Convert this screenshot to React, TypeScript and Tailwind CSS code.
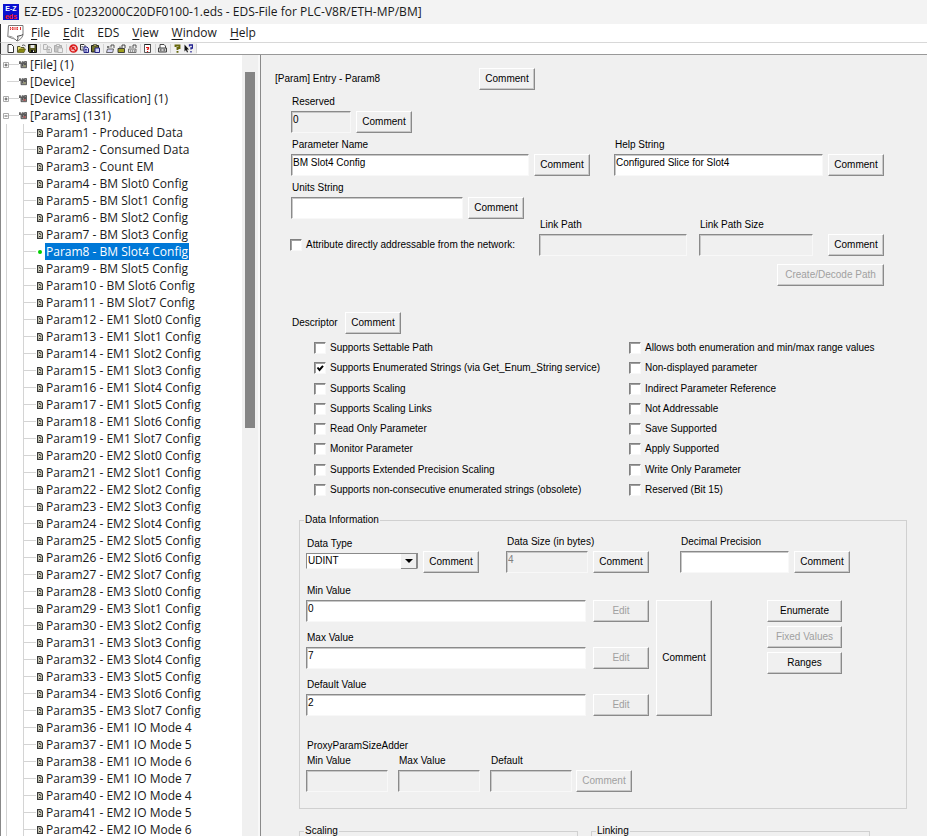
import { useState } from 'react'
import type { ReactNode } from 'react'
import clsx from 'clsx'

const menus = ['File', 'Edit', 'EDS', 'View', 'Window', 'Help']

const range = (count: number, from = 0) => Array.from({ length: count }, (_, i) => i + from)

const params = [
  'Produced Data',
  'Consumed Data',
  'Count EM',
  ...range(8).map((n) => `BM Slot${n} Config`),
  ...['EM1', 'EM2', 'EM3'].flatMap((em) => range(8).map((n) => `${em} Slot${n} Config`)),
  ...range(4, 4).map((n) => `EM1 IO Mode ${n}`),
  ...range(3, 4).map((n) => `EM2 IO Mode ${n}`),
]

const descriptorLeft = [
  'Supports Settable Path',
  'Supports Enumerated Strings (via Get_Enum_String service)',
  'Supports Scaling',
  'Supports Scaling Links',
  'Read Only Parameter',
  'Monitor Parameter',
  'Supports Extended Precision Scaling',
  'Supports non-consecutive enumerated strings (obsolete)',
]

const descriptorRight = [
  'Allows both enumeration and min/max range values',
  'Non-displayed parameter',
  'Indirect Parameter Reference',
  'Not Addressable',
  'Save Supported',
  'Apply Supported',
  'Write Only Parameter',
  'Reserved (Bit 15)',
]

/* ---------- icons ---------- */

function AppLogo() {
  return (
    <svg width="16" height="16" viewBox="0 0 16 16" className="font-['Liberation_Sans',sans-serif] font-bold">
      <rect width="16" height="16" fill="#0a10d0" />
      <text x="8" y="6.500" fontSize="7" textAnchor="middle" fill="#fff">
        E-Z
      </text>
      <text x="8" y="14.500" fontSize="7" textAnchor="middle" fill="#ff1818">
        eds
      </text>
    </svg>
  )
}

function DocumentLogo() {
  return (
    <svg width="17" height="17" viewBox="0 0 17 17">
      <path d="M1.500.5h14.500v9.500c-1 3-3 5-6 6-1-1.500-3-2.500-4.500-2.500L.8 11.500z" fill="#fff" stroke="#777" />
      <path d="M16 9.500c-2 1.200-4 1.500-5.500 1.500.8 1.500.5 3.500-.8 5" fill="#f4f4f4" stroke="#444" />
      <path d="M.5 11.500c2-.8 5 .2 7 2.200" fill="none" stroke="#999" />
      <path d="M3.500 2v3M5.500 2v3M7 2v3M9 2v3M10.500 2v3M13.500 2v3" stroke="#e03030" strokeWidth="1" />
      <path d="M3 3.500h8" stroke="#f0a0a0" strokeWidth=".8" />
    </svg>
  )
}

function SectionIcon({ red }: { red?: boolean }) {
  return (
    <svg width="8" height="8" viewBox="0 0 8 8" className="shrink-0">
      <path d="M0 .8h1.800v1.700H0zM3 2.200V.8h1.500v1.400M5.500 2.200V.5h2v6.200H2V2.500h5" fill="#8a8a8a" stroke="#4a4a4a" strokeWidth=".8" />
      <path d="M3 4h1M5.500 3.500h1" stroke="#222" />
      <path d="M4.500 5h2" stroke={red ? '#d02020' : '#b0b060'} />
    </svg>
  )
}

function ParamIcon() {
  return (
    <svg width="6" height="8" viewBox="0 0 6 8" className="shrink-0">
      <path d="M.6.6h3.200l1.600 1.600v5.200H.6z" fill="#e4e4d0" stroke="#3a3a3a" strokeWidth="1.200" />
      <path d="M2 2.600h1.200v1.200h1M2 5.500h1.800" fill="none" stroke="#333" strokeWidth="1" />
    </svg>
  )
}

const toolIcons: Record<string, ReactNode> = {
  New: <path d="M2 .5h3.500L7.500 2.500v6H2z" fill="#fff" stroke="#333" />,
  Open: (
    <>
      <path d="M.5 8V2.500h2.500l1 1h3V5" fill="#e8e070" stroke="#555530" />
      <path d="M.5 8.500L2.500 5h6L7 8.500z" fill="#8a8a10" stroke="#444410" strokeWidth=".6" />
      <path d="M5 1.500Q7 0 8.500 2" fill="none" stroke="#333" strokeWidth=".8" />
    </>
  ),
  Save: (
    <>
      <path d="M.5.500h8v8H1.500l-1-1z" fill="#55551a" stroke="#111" />
      <path d="M2.500 1h4v3h-4z" fill="#e8e8e8" />
      <path d="M3 6h3.500v2.500H3z" fill="#111" />
      <path d="M5.500 6.500v1.500" stroke="#fff" />
    </>
  ),
  Copy: (
    <path d="M.5.5h3l1 1v4h-4zM4 3h3l1.500 1.500v4H4zM5 5.500h2M5 7h2" fill="#ececec" stroke="#b4b4b4" />
  ),
  Paste: (
    <>
      <path d="M.5 1.500h7v6.500h-7z" fill="#c4c4c4" stroke="#aaa" />
      <path d="M2.500.5h3v2h-3zM4 4h4.500v4.500H4z" fill="#eee" stroke="#aaa" strokeWidth=".8" />
    </>
  ),
  Delete: (
    <>
      <circle cx="4.500" cy="4.500" r="3.600" fill="#f8c8c8" stroke="#d81818" strokeWidth="1.500" />
      <path d="M2 2l5 5M2.500 5.500l3-2.500" stroke="#d81818" strokeWidth="1.300" />
    </>
  ),
  'Copy Section': (
    <>
      <path d="M.5.500h3.500l1 1v4.500H.5z" fill="#fff" stroke="#333" />
      <path d="M1.500 2.500h2M1.500 4h2" stroke="#333" strokeWidth=".7" />
      <path d="M4 3h3l1.500 1.500v4H4z" fill="#c8c8f4" stroke="#202080" />
      <path d="M5 5.500h2M5 7h2" stroke="#202080" strokeWidth=".8" />
    </>
  ),
  'Paste Section': (
    <>
      <path d="M.5 1.500h7v6.500h-7z" fill="#77772c" stroke="#222" />
      <path d="M2.500.500h3v1.500h-3z" fill="#e8e060" stroke="#333" strokeWidth=".7" />
      <path d="M4 4h4.500v4.500H4z" fill="#d0d0f4" stroke="#202080" />
    </>
  ),
  Upload: (
    <>
      <path d="M.5 8.500L1.500 5h6l-.8 3.500z" fill="#d8d8f8" stroke="#555" strokeWidth=".9" />
      <path d="M1 3h2.500M2 2v2M5 3.500V1h3v3" fill="none" stroke="#444" strokeWidth=".9" />
    </>
  ),
  Lock: (
    <>
      <path d="M1 4.500h6.500v4H1z" fill="#a0a020" stroke="#333" strokeWidth=".9" />
      <path d="M3 4V2.500M5 4V1h3v3" fill="none" stroke="#333" strokeWidth=".9" />
    </>
  ),
  Network: (
    <>
      <path d="M.5 5h7.500v3.500H.5z" fill="#ddd" stroke="#666" strokeWidth=".9" />
      <path d="M1 3h2.500M5 4V1h3v3M2 7h1M4 7h1M6 7h1" fill="none" stroke="#444" strokeWidth=".9" />
    </>
  ),
  Check: (
    <>
      <path d="M1.500.500h6v8h-6z" fill="#fff" stroke="#555" />
      <path d="M1.500.500h6" stroke="#222" />
      <path d="M3 3.500h2.500v1.500h-1v1M4.500 7v1" fill="none" stroke="#e01818" strokeWidth="1.200" />
    </>
  ),
  Print: (
    <>
      <path d="M2 4V.500h4L7.500 2v2" fill="#fff" stroke="#333" strokeWidth=".9" />
      <path d="M.5 4h8v4h-8z" fill="#ccc" stroke="#444" />
      <path d="M2 6h1.500M5.500 6h1.500" stroke="#222" />
    </>
  ),
  About: (
    <path d="M2.500 3V1.500h4V4h-2v2M4.500 7v1.800" fill="none" stroke="#66660a" strokeWidth="1.900" />
  ),
  'Context Help': (
    <>
      <path d="M.5.500v7l1.500-1.500 1 2.500 1-.5-1-2.500h2z" fill="#111" />
      <path d="M5.500 2.500V1h3v3H7v1.500M7 7v1.500" fill="none" stroke="#202090" strokeWidth="1.300" />
    </>
  ),
}

const toolGroups = [
  ['New', 'Open', 'Save'],
  ['Copy', 'Paste'],
  ['Delete', 'Copy Section', 'Paste Section'],
  ['Upload', 'Lock', 'Network'],
  ['Check'],
  ['Print'],
  ['About', 'Context Help'],
]

/* ---------- form controls ---------- */

interface PushButtonProps {
  children?: ReactNode
  className?: string
  disabled?: boolean
}

function PushButton({ children = 'Comment', className = 'h-[22px] w-14', disabled }: PushButtonProps) {
  return (
    <button
      type="button"
      disabled={disabled}
      className={clsx(
        'shrink-0 border border-t-white border-l-white border-r-[#8a8a8a] border-b-[#8a8a8a] bg-[#f0f0f0] text-center shadow-[inset_-1px_-1px_0_#c8c8c8] disabled:text-[#a0a0a0]',
        className,
      )}
    >
      {children}
    </button>
  )
}

interface FieldProps {
  id: string
  label: string
  value?: string
  width: string
  disabled?: boolean
  grey?: boolean
  muted?: boolean
}

function Field({ id, label, value = '', width, disabled, grey, muted }: FieldProps) {
  return (
    <div className={clsx('flex flex-col', width)}>
      <label htmlFor={id} className="h-[15px] pl-px leading-3 whitespace-nowrap">
        {label}
      </label>
      <input
        id={id}
        defaultValue={value}
        disabled={disabled}
        readOnly={grey}
        className={clsx(
          'h-[22px] w-full border border-t-[#8a8a8a] border-l-[#8a8a8a] border-r-[#f8f8f8] border-b-[#f8f8f8] pb-1.5 pl-px shadow-[inset_1px_1px_0_#c8c8c8] outline-none',
          grey || disabled ? 'bg-[#f0f0f0]' : 'bg-white',
          muted && 'text-[#808080]',
        )}
      />
    </div>
  )
}

function CheckBox({ label, defaultChecked }: { label: string; defaultChecked?: boolean }) {
  return (
    <label className="flex h-3 items-center gap-1 whitespace-nowrap">
      <span className="relative flex size-3">
        <input
          type="checkbox"
          defaultChecked={defaultChecked}
          className="peer size-3 appearance-none border border-t-[#808080] border-l-[#808080] border-r-[#f8f8f8] border-b-[#f8f8f8] bg-white shadow-[inset_1px_1px_0_#a0a0a0]"
        />
        <svg viewBox="0 0 12 12" className="pointer-events-none absolute inset-0 hidden peer-checked:block">
          <path d="M3.500 5.500L5.500 8 9 3.800" fill="none" stroke="#000" strokeWidth="2" />
        </svg>
      </span>
      {label}
    </label>
  )
}

function GroupBox({ title, className, children }: { title: string; className?: string; children?: ReactNode }) {
  return (
    <fieldset className={clsx('min-w-0 border border-[#d0d0d0]', className)}>
      <legend className="ml-1 px-px leading-3">{title}</legend>
      {children}
    </fieldset>
  )
}

/* ---------- panes ---------- */

function TreeSection({ label, box, red }: { label: string; box?: '+' | '-'; red?: boolean }) {
  return (
    <li className="flex h-[17px] items-center">
      <span className="flex w-[18px] shrink-0 items-center pl-0.5">
        {box ? (
          <svg width="6" height="6" viewBox="0 0 6 6" className="shrink-0">
            <path d="M.5.500h5v5h-5z" fill="#fff" stroke="#aaa" />
            <path d={box === '+' ? 'M1.500 3h3M3 1.500v3' : 'M1.500 3h3'} stroke="#333" strokeWidth=".8" />
          </svg>
        ) : (
          <span className="w-1" />
        )}
        <span className="h-px flex-1 bg-[#d4d4d4]" />
      </span>
      <SectionIcon red={red} />
      <span className="pl-[3px]">{label}</span>
    </li>
  )
}

function Tree() {
  const [selected, setSelected] = useState(8)

  return (
    <aside className="flex w-[258px] shrink-0 bg-white">
      <div className="flex-1 overflow-y-auto border-l border-[#888] font-['Open_Sans','Noto_Sans',sans-serif] text-[12px] leading-4 text-[#1a1a1a] [scrollbar-width:none]">
        <ul className="pt-px whitespace-nowrap">
          <TreeSection label="[File] (1)" box="+" />
          <TreeSection label="[Device]" />
          <TreeSection label="[Device Classification] (1)" box="+" red />
          <TreeSection label="[Params] (131)" box="-" red />
          <li className="ml-[5px] border-l border-[#d4d4d4] pl-4">
            <ul className="border-l border-[#d4d4d4]">
              {params.map((name, i) => {
                const active = i + 1 === selected
                return (
                  <li key={name} className="flex h-[17px] items-center">
                    <span className="h-px w-3 bg-[#d4d4d4]" />
                    <span className="flex w-[9px] pl-px">
                      {active ? <span className="ml-px size-1 rounded-full bg-[#00d000]" /> : <ParamIcon />}
                    </span>
                    <button
                      type="button"
                      onClick={() => setSelected(i + 1)}
                      className={clsx('h-[17px] px-px leading-4', active && 'bg-[#0078d7] text-white')}
                    >
                      Param{i + 1} - {name}
                    </button>
                  </li>
                )
              })}
            </ul>
          </li>
        </ul>
      </div>
      <div className="w-4 bg-[#f0f0f0] px-[3px] pt-[17px]">
        <div className="h-[356px] bg-[#858585]" />
      </div>
    </aside>
  )
}

function DataInformation() {
  return (
    <GroupBox title="Data Information" className="mr-5 ml-[38px] h-[295px]">
      <div className="flex items-end pt-2.5 pl-[6px]">
        <div className="mr-[5px] flex w-28 flex-col">
          <label htmlFor="dataType" className="h-[15px] pl-px leading-3">
            Data Type
          </label>
          <div className="relative mb-1 h-4">
            <select
              id="dataType"
              className="h-4 w-full appearance-none border border-t-[#8a8a8a] border-l-[#8a8a8a] border-r-[#8a8a8a] border-b-[#f8f8f8] bg-white pl-px leading-3"
            >
              <option>UDINT</option>
            </select>
            <span className="pointer-events-none absolute top-px right-px flex h-[15px] w-4 items-center justify-center border-r border-b border-[#8a8a8a] bg-[#f0f0f0]">
              <svg width="8" height="4" viewBox="0 0 8 4">
                <path d="M0 0h8L4 4z" />
              </svg>
            </span>
          </div>
        </div>
        <PushButton />
        <div className="ml-[27px] flex items-end gap-[5px]">
          <Field id="dataSize" label="Data Size (in bytes)" value="4" width="w-[82px]" grey muted />
          <PushButton />
        </div>
        <div className="ml-[31px] flex items-end gap-[5px]">
          <Field id="precision" label="Decimal Precision" width="w-[109px]" />
          <PushButton />
        </div>
      </div>

      <div className="flex pt-3 pl-[6px]">
        <div className="flex flex-col gap-2.5">
          {[
            ['Min Value', '0'],
            ['Max Value', '7'],
            ['Default Value', '2'],
          ].map(([label, value]) => (
            <div key={label} className="flex items-end gap-[7px]">
              <Field id={label} label={label} value={value} width="w-[280px]" />
              <PushButton disabled>Edit</PushButton>
            </div>
          ))}
        </div>
        <PushButton className="mt-[15px] ml-[7px] w-14" />
        <div className="mt-[15px] ml-[55px] flex flex-col gap-1">
          <PushButton className="h-[22px] w-[75px]">Enumerate</PushButton>
          <PushButton className="h-[22px] w-[75px]" disabled>
            Fixed Values
          </PushButton>
          <PushButton className="h-[22px] w-[75px]">Ranges</PushButton>
        </div>
      </div>

      <div className="pt-6 pl-[6px]">
        <p className="h-[15px] pl-px leading-3">ProxyParamSizeAdder</p>
        <div className="flex items-end gap-1">
          <div className="flex gap-2.5">
            <Field id="proxyMin" label="Min Value" width="w-[82px]" disabled />
            <Field id="proxyMax" label="Max Value" width="w-[82px]" disabled />
            <Field id="proxyDefault" label="Default" width="w-[82px]" disabled />
          </div>
          <PushButton disabled />
        </div>
      </div>
    </GroupBox>
  )
}

function ParamForm() {
  return (
    <main className="min-w-0 flex-1 overflow-y-auto border-l border-[#8a8a8a] bg-[#f0f0f0] font-['Liberation_Sans',Arial,sans-serif] text-[10px] leading-3 text-black [scrollbar-width:none]">
      <div className="flex items-center pt-[13px] pl-[14px]">
        <h1 className="w-[204px]">[Param] Entry - Param8</h1>
        <PushButton />
      </div>

      <div className="flex flex-col gap-[6px] pt-[6px] pl-[30px]">
        <div className="flex items-end gap-[5px]">
          <Field id="reserved" label="Reserved" value="0" width="w-[60px]" grey />
          <PushButton />
        </div>
        <div className="flex items-end gap-[5px]">
          <Field id="name" label="Parameter Name" value="BM Slot4 Config" width="w-[238px]" />
          <PushButton />
          <div className="ml-[19px] flex items-end gap-[5px]">
            <Field id="help" label="Help String" value="Configured Slice for Slot4" width="w-[209px]" />
            <PushButton />
          </div>
        </div>
        <div className="flex items-end gap-[5px]">
          <Field id="units" label="Units String" width="w-[172px]" />
          <PushButton />
        </div>
      </div>

      <div className="flex items-end pl-[29px]">
        <div className="w-[249px] pb-[5px]">
          <CheckBox label="Attribute directly addressable from the network:" />
        </div>
        <Field id="linkPath" label="Link Path" width="w-[148px]" disabled />
        <div className="ml-3 flex items-end gap-[15px]">
          <Field id="linkPathSize" label="Link Path Size" width="w-[114px]" disabled />
          <PushButton />
        </div>
      </div>
      <div className="flex pt-2 pl-[516px]">
        <PushButton className="h-[22px] w-[107px]" disabled>
          Create/Decode Path
        </PushButton>
      </div>

      <div className="flex items-center pt-[26px] pl-[30px]">
        <h2 className="w-[54px] pl-px">Descriptor</h2>
        <PushButton />
      </div>
      <div className="flex pt-2 pl-[53px]">
        <div className="flex h-[154px] w-[315px] flex-col justify-between">
          {descriptorLeft.map((label) => (
            <CheckBox key={label} label={label} defaultChecked={label.includes('Enum_String')} />
          ))}
        </div>
        <div className="flex h-[154px] flex-col justify-between">
          {descriptorRight.map((label) => (
            <CheckBox key={label} label={label} />
          ))}
        </div>
      </div>

      <div className="pt-[18px]">
        <DataInformation />
      </div>
      <div className="flex gap-[13px] pt-4 pl-[38px]">
        <GroupBox title="Scaling" className="h-24 w-[279px]" />
        <GroupBox title="Linking" className="h-24 w-[279px]" />
      </div>
    </main>
  )
}

export default function App() {
  return (
    <div className="flex h-screen flex-col overflow-hidden bg-white">
      <header className="shrink-0 font-['Open_Sans','Noto_Sans',sans-serif] text-[12px] text-[#1a1a1a]">
        <div className="flex h-6 items-center gap-[5px] bg-[#f3f3f3] pl-[3px]">
          <AppLogo />
          <span className="whitespace-nowrap">EZ-EDS - [0232000C20DF0100-1.eds - EDS-File for PLC-V8R/ETH-MP/BM]</span>
        </div>
        <nav className="flex h-[18px] items-center border-l border-[#333] pl-[6px]">
          <DocumentLogo />
          <div className="flex gap-[13px] pl-[7px]">
            {menus.map((menu) => (
              <button key={menu} type="button" className="leading-4">
                {menu === 'EDS' ? menu : <span className="underline underline-offset-2">{menu[0]}</span>}
                {menu !== 'EDS' && menu.slice(1)}
              </button>
            ))}
          </div>
        </nav>
        <div className="flex h-3 border-t border-l border-t-[#d8d8d8] border-l-[#333]">
          <div className="flex items-center bg-[#f0f0f0] pl-[3px]">
            {toolGroups.map((group) => (
              <div key={group[0]} className="flex items-center border-r border-[#d4d4d4] pr-0.5 pl-px">
                {group.map((tool) => (
                  <button key={tool} type="button" aria-label={tool} className="flex w-[11px] justify-center">
                    <svg width="9" height="9" viewBox="0 0 9 9">
                      {toolIcons[tool]}
                    </svg>
                  </button>
                ))}
              </div>
            ))}
          </div>
        </div>
      </header>

      <div className="flex min-h-0 flex-1 border-t border-[#999]">
        <Tree />
        <div className="w-0.5 bg-[#f8f8f8]" />
        <ParamForm />
      </div>
    </div>
  )
}
